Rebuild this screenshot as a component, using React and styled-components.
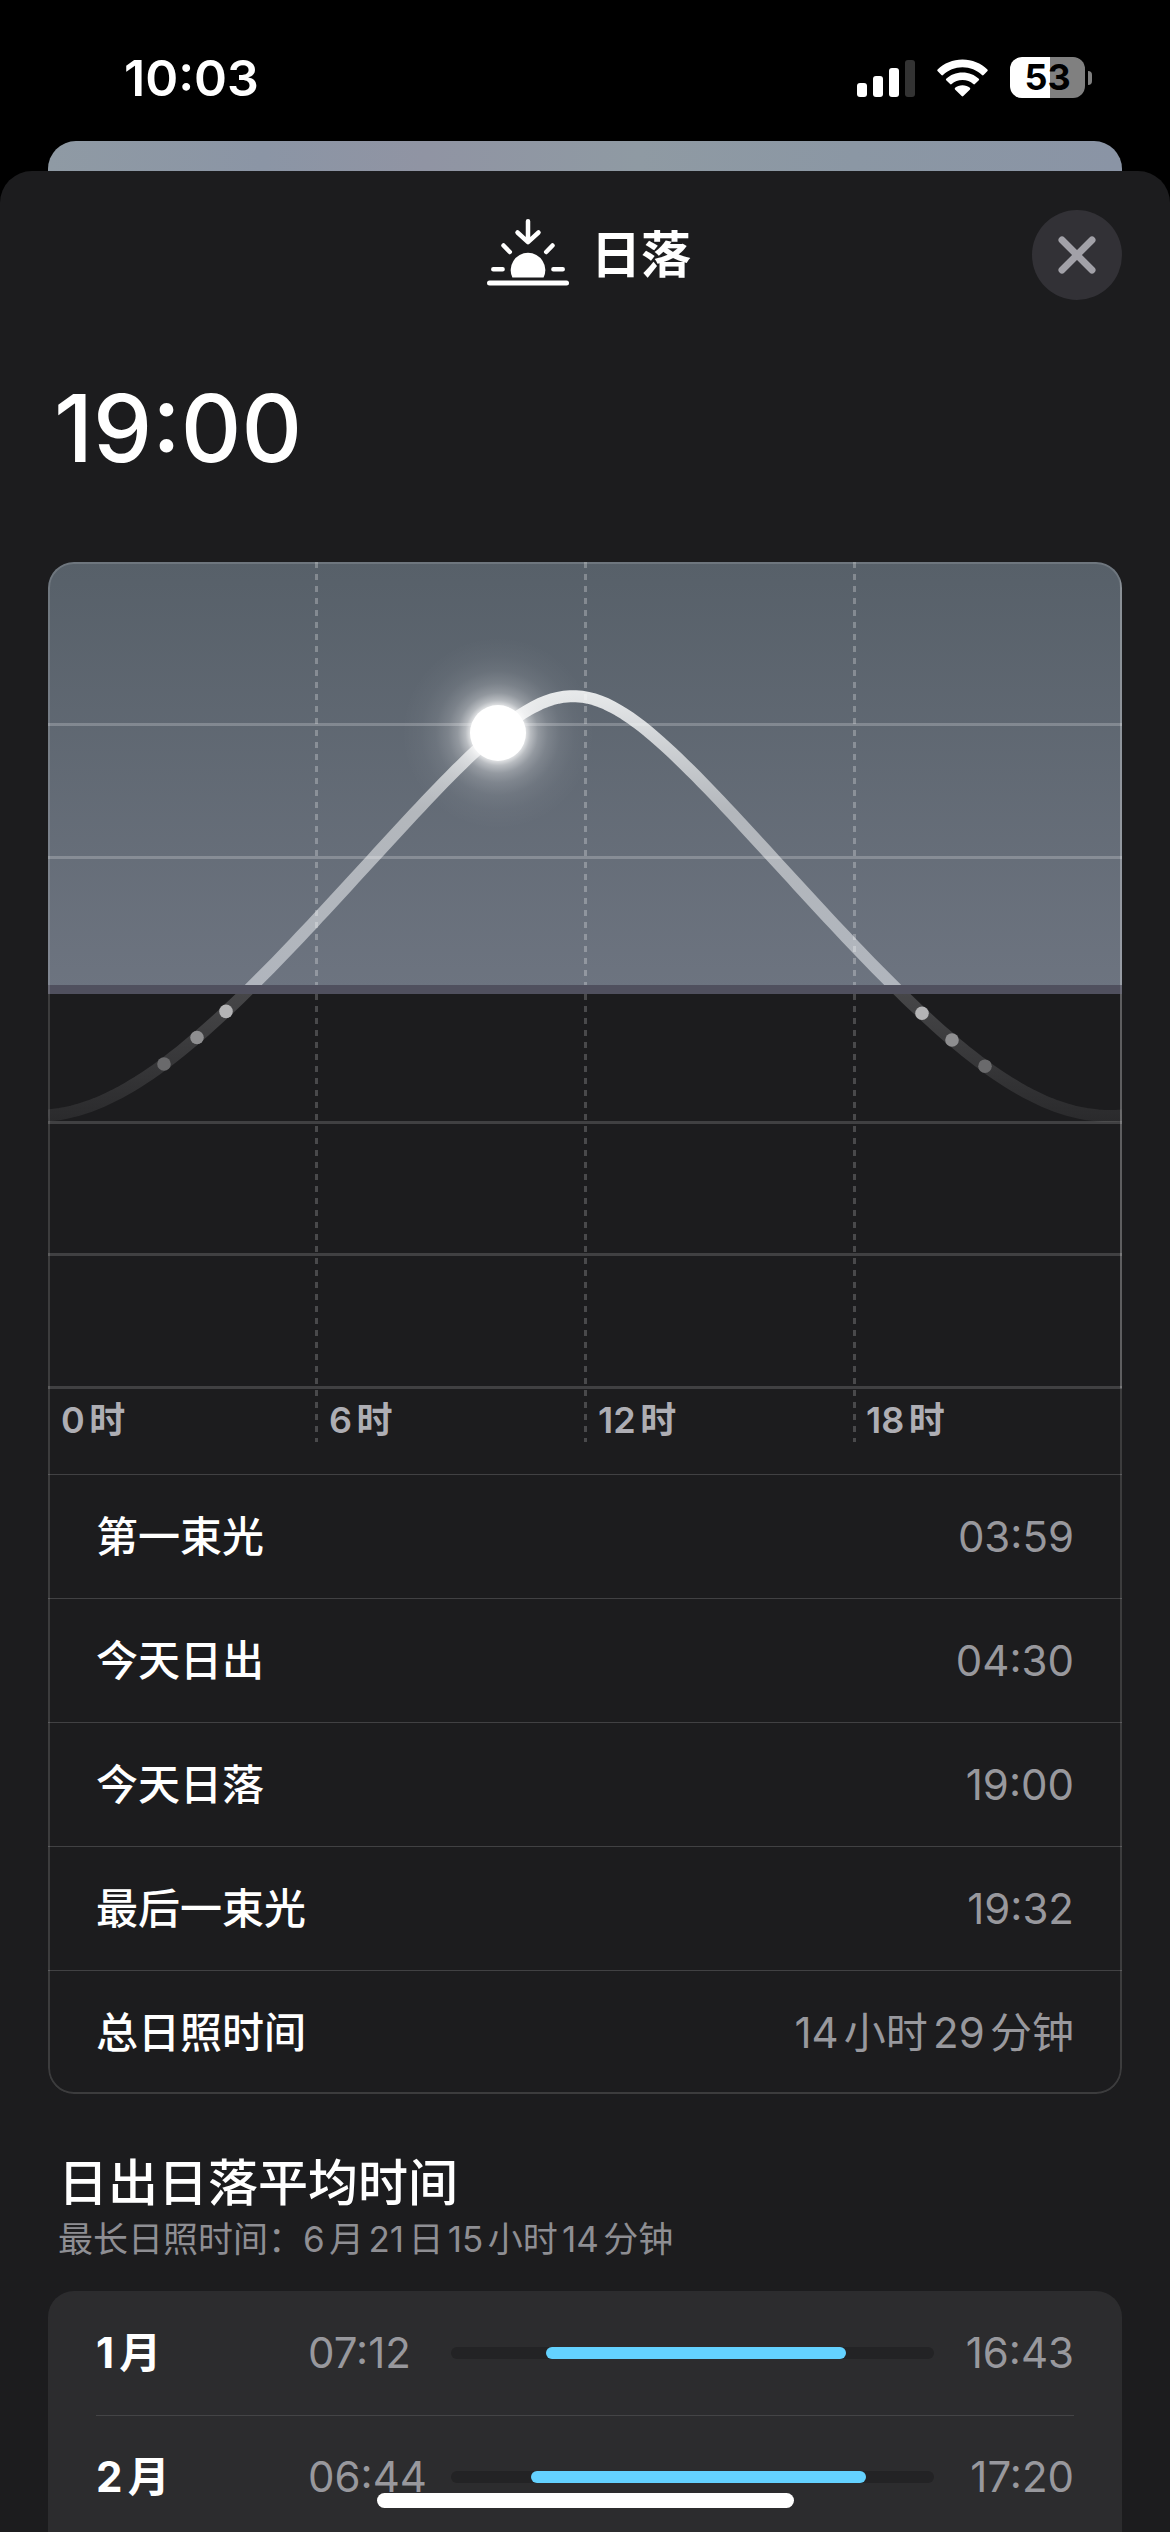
import React from 'react';
import styled, { createGlobalStyle } from 'styled-components';

const GlobalStyle = createGlobalStyle`
  * {
    box-sizing: border-box;
  }
  body {
    margin: 0;
    background: #000;
    color: #fff;
    font-family: Inter, 'Noto Sans CJK SC', sans-serif;
    text-autospace: normal;
  }
`;
const Screen = styled.div`
  display: flex;
  flex-direction: column;
  height: 100vh;
  overflow: hidden;
`;
const StatusBar = styled.div`
  display: flex;
  flex: none;
  justify-content: space-between;
  align-items: center;
  height: 141px;
  padding: 14px 78px 0 124px;
`;
const Clock = styled.div`
  font-size: 50px;
  line-height: 60px;
  font-weight: 600;
`;
const StatusIcons = styled.div`
  display: flex;
  align-items: center;
  gap: 22px;
`;
const BatteryBox = styled.div`
  display: flex;
  align-items: center;
  gap: 3px;
`;
const BatteryBody = styled.div`
  width: 75px;
  height: 41px;
  border-radius: 12px;
  background: linear-gradient(to right, #fff ${props => props.$level}%, #808080 ${props => props.$level}%);
  color: #000;
  font-size: 36px;
  line-height: 41px;
  font-weight: 700;
  text-align: center;
`;
const BatteryTip = styled.div`
  width: 4px;
  height: 14px;
  border-radius: 0 7px 7px 0;
  background: #808080;
`;
const BackCard = styled.div`
  height: 30px;
  flex: none;
  margin: 0 48px;
  border-radius: 28px 28px 0 0;
  background: linear-gradient(to right, #8f9aa4, #8b95a5 20%, #9094a3 35%, #8f9aa3 55%, #8b97a4 75%, #8a94a5);
`;
const Sheet = styled.main`
  flex: 1;
  padding: 39px 48px 0;
  border-radius: 32px 32px 0 0;
  background: #1c1c1e;
`;
const Header = styled.header`
  display: grid;
  grid-template-columns: 90px 1fr 90px;
  align-items: center;
`;
const Title = styled.h1`
  grid-column: 2;
  display: flex;
  justify-content: center;
  align-items: center;
  gap: 22px;
  margin: 0;
  padding-left: 8px;
  font-size: 50px;
  line-height: 60px;
  font-weight: 600;
`;
const CloseButton = styled.button`
  display: flex;
  justify-content: center;
  align-items: center;
  width: 90px;
  height: 90px;
  padding: 0;
  border: none;
  border-radius: 50%;
  background: #323136;
  cursor: pointer;
`;
const BigTime = styled.div`
  padding: 72px 6px 78px;
  font-size: 94px;
  line-height: 112px;
  font-weight: 500;
`;
const Card = styled.section`
  position: relative;
  overflow: hidden;
  border-radius: 26px;

  /* hairline drawn over the chart */
  &::after {
    content: '';
    position: absolute;
    inset: 0;
    border: 2px solid rgba(255, 255, 255, 0.14);
    border-radius: 26px;
    pointer-events: none;
  }
`;
const ChartSvg = styled.svg`
  display: block;
  width: 100%;
  height: auto;
`;
const AxisText = styled.text`
  fill: #aeaeb4;
  font-size: 36px;
  font-weight: 600;
`;
const Details = styled.dl`
  margin: 0;
`;
const DetailRow = styled.div`
  display: flex;
  justify-content: space-between;
  align-items: center;
  height: 124px;
  padding: 0 48px;
  border-top: 1px solid #414143;
  font-size: 42px;
  line-height: 60px;
`;
const DetailLabel = styled.dt`
  font-weight: 500;
`;
const DetailValue = styled.dd`
  margin: 0;
  color: #98989d;
`;
const SectionTitle = styled.h2`
  margin: 0;
  padding: 57px 10px 0;
  font-size: 50px;
  line-height: 64px;
  font-weight: 500;
`;
const SectionNote = styled.p`
  margin: 0;
  padding: 0 10px 28px;
  color: #8e8e93;
  font-size: 35px;
  line-height: 48px;
`;
const MonthCard = styled.section`
  padding: 0 48px 48px;
  border-radius: 26px;
  background: #2c2c2e;
`;
const MonthTable = styled.table`
  width: 100%;
  border-collapse: collapse;
  font-size: 42px;
  line-height: 60px;
`;
const MonthRow = styled.tr`
  height: 124px;

  & + & {
    border-top: 1px solid #444446;
  }
`;
const MonthName = styled.th`
  min-width: 212px;
  padding: 0;
  font-weight: 700;
  text-align: left;
`;
const MonthTime = styled.td`
  min-width: 114px;
  padding: 0;
  color: #98989d;
  text-align: ${props => props.$align};
`;
const BarCell = styled.td`
  width: 100%;
  padding: 0 26px 0 24px;
`;
const Track = styled.div`
  height: 12px;
  border-radius: 6px;
  background: #232325;
`;
const Daylight = styled.div`
  height: 12px;
  border-radius: 6px;
  background: #64d2ff;
`;
const HomeIndicator = styled.div`
  position: fixed;
  bottom: 24px;
  left: 50%;
  width: 417px;
  height: 15px;
  margin-left: -208px;
  border-radius: 8px;
  background: #fff;
`;

const details = [
  { label: '第一束光', value: '03:59' },
  { label: '今天日出', value: '04:30' },
  { label: '今天日落', value: '19:00' },
  { label: '最后一束光', value: '19:32' },
  { label: '总日照时间', value: '14小时29分钟' },
];
const months = [
  { name: '1月', sunrise: '07:12', sunset: '16:43' },
  { name: '2月', sunrise: '06:44', sunset: '17:20' },
];

// chart geometry
const WIDTH = 1074;
const HORIZON = 423;
const NOON = 525;
const PX_PER_DEGREE = 4.41;
const rad = deg => (deg * Math.PI) / 180;

// solar elevation for latitude 42.4 and declination 17.9
const sunY = x => {
  const hour = ((x - NOON) / WIDTH) * 2 * Math.PI;
  const sin = Math.sin(rad(42.4)) * Math.sin(rad(17.9))
    + Math.cos(rad(42.4)) * Math.cos(rad(17.9)) * Math.cos(hour);
  return HORIZON - (Math.asin(sin) * 180 / Math.PI) * PX_PER_DEGREE;
};
const curve = Array.from({ length: 180 }, (_, i) => {
  const x = i * 6;
  return `${i ? 'L' : 'M'}${x} ${sunY(x).toFixed(1)}`;
}).join('');

const gridRows = [162, 295, 560, 692, 825];
const gridColumns = [268, 537, 806];
const hours = [
  { x: 13, text: '0时' },
  { x: 281, text: '6时' },
  { x: 550, text: '12时' },
  { x: 818, text: '18时' },
];
const dots = [
  { x: 116, color: '#6a6a6c' },
  { x: 149, color: '#8e8e90' },
  { x: 178, color: '#b4b4b6' },
  { x: 874, color: '#b4b4b6' },
  { x: 904, color: '#8e8e90' },
  { x: 937, color: '#6a6a6c' },
];

const toMinutes = time => {
  const [h, m] = time.split(':').map(Number);
  return h * 60 + m;
};
// the bars run from 04:12 to 19:30
const percent = minutes => (minutes / 918) * 100;
const barStyle = (sunrise, sunset) => ({
  marginLeft: `${percent(toMinutes(sunrise) - 252)}%`,
  width: `${percent(toMinutes(sunset) - toMinutes(sunrise))}%`,
});

const Signal = () => (
  <svg width="58" height="38" viewBox="0 0 58 38" aria-hidden="true">
    <rect x="0" y="24" width="10" height="14" rx="3" fill="#fff" />
    <rect x="16" y="17" width="10" height="21" rx="3" fill="#fff" />
    <rect x="32" y="9" width="10" height="29" rx="3" fill="#fff" />
    <rect x="48" y="1" width="10" height="37" rx="3" fill="#333" />
  </svg>
);

const Wifi = () => (
  <svg width="51" height="38" viewBox="0 0 51 38" aria-hidden="true">
    <path fill="#fff" d="M25.5 0.5C35.2 0.5 44 4.3 50.4 10.5C50.9 11 50.9 11.6 50.5 12.1L46.6 16C46.1 16.5 45.5 16.5 45 16C39.9 11.2 33 8.3 25.5 8.3S11.1 11.2 6 16C5.5 16.5 4.9 16.5 4.4 16L0.5 12.1C0.1 11.6 0.1 11 0.6 10.5C7 4.3 15.8 0.5 25.5 0.5Z" />
    <path fill="#fff" d="M25.5 13.4C31.9 13.4 37.7 15.8 41.8 19.7C42.3 20.2 42.3 20.8 41.8 21.3L37.9 25.1C37.4 25.6 36.8 25.6 36.3 25.1C33.5 22.5 29.7 21 25.5 21S17.5 22.5 14.7 25.1C14.2 25.6 13.6 25.6 13.1 25.1L9.2 21.3C8.7 20.8 8.7 20.2 9.2 19.7C13.3 15.8 19.1 13.4 25.5 13.4Z" />
    <path fill="#fff" d="M25.5 26.2C28.4 26.2 31 27.2 32.9 28.8C33.4 29.3 33.4 29.9 33 30.4L26.3 37C25.8 37.5 25.2 37.5 24.7 37L18 30.4C17.6 29.9 17.6 29.3 18.1 28.8C20 27.2 22.6 26.2 25.5 26.2Z" />
  </svg>
);

const SunsetIcon = () => (
  <svg width="82" height="72" viewBox="0 0 82 72" fill="none" stroke="#fff" strokeWidth="4.5" strokeLinecap="round" strokeLinejoin="round" aria-hidden="true">
    <path d="M41 2.3V22.5M30.5 13.5L41 23.2L51.5 13.5" />
    <path d="M16.5 26.5L22.8 33M65.5 26.5L59.2 33M6.3 50.3H15.6M66.4 50.3H75.7" />
    <path d="M2.5 64H79.5" strokeWidth="5" />
    <path d="M25.4 58.6A17.3 17.3 0 1 1 56.6 58.6Z" fill="#fff" stroke="none" />
  </svg>
);

const SunChart = () => (
  <ChartSvg viewBox="0 0 1074 912" role="img" aria-label="太阳高度">
    <defs>
      <linearGradient id="sky" x1="0" y1="0" x2="0" y2="1">
        <stop offset="0" stopColor="#576069" />
        <stop offset="1" stopColor="#6d7480" />
      </linearGradient>
      <linearGradient id="dayLine" gradientUnits="userSpaceOnUse" x1="0" y1="128" x2="0" y2="432">
        <stop offset="0" stopColor="#e8eaeb" />
        <stop offset="0.15" stopColor="#d2d5d8" />
        <stop offset="0.4" stopColor="#b3b7bc" />
        <stop offset="1" stopColor="#b0b5bd" />
      </linearGradient>
      <linearGradient id="nightLine" gradientUnits="userSpaceOnUse" x1="0" y1="432" x2="0" y2="560">
        <stop offset="0" stopColor="#464648" />
        <stop offset="1" stopColor="#2a2a2c" />
      </linearGradient>
      <radialGradient id="glow">
        <stop offset="0.28" stopColor="#fff" stopOpacity="0.85" />
        <stop offset="0.34" stopColor="#fff" stopOpacity="0.55" />
        <stop offset="0.42" stopColor="#fff" stopOpacity="0.32" />
        <stop offset="0.52" stopColor="#fff" stopOpacity="0.18" />
        <stop offset="0.65" stopColor="#fff" stopOpacity="0.08" />
        <stop offset="0.8" stopColor="#fff" stopOpacity="0.03" />
        <stop offset="1" stopColor="#fff" stopOpacity="0" />
      </radialGradient>
      <clipPath id="day">
        <rect width="1074" height="428" />
      </clipPath>
      <clipPath id="night">
        <rect y="428" width="1074" height="484" />
      </clipPath>
    </defs>
    <rect width="1074" height="428" fill="url(#sky)" />
    <path d={curve} fill="none" stroke="url(#dayLine)" strokeWidth="12" clipPath="url(#day)" />
    <path d={curve} fill="none" stroke="url(#nightLine)" strokeWidth="12" clipPath="url(#night)" />
    {gridRows.map(y => (
      <path key={y} d={`M0 ${y + 0.5}H1074`} stroke="#fff" strokeWidth="3" strokeOpacity={y < HORIZON ? 0.22 : 0.16} />
    ))}
    {gridColumns.map(x => (
      <g key={x} stroke="#fff" strokeWidth="3" strokeDasharray="6 6">
        <path d={`M${x + 0.5} 0V424`} strokeOpacity="0.26" />
        <path d={`M${x + 0.5} 432V880`} strokeOpacity="0.2" />
      </g>
    ))}
    <path d="M1073 0V826" stroke="#fff" strokeWidth="2" strokeOpacity="0.18" />
    <rect y="423" width="1074" height="9" fill="#50505e" />
    {dots.map(dot => (
      <circle key={dot.x} cx={dot.x} cy={sunY(dot.x)} r="6.8" fill={dot.color} />
    ))}
    <circle cx="450" cy="171" r="96" fill="url(#glow)" />
    <circle cx="450" cy="171" r="28" fill="#fff" />
    {hours.map(hour => (
      <AxisText key={hour.x} x={hour.x} y="871">{hour.text}</AxisText>
    ))}
  </ChartSvg>
);

const App = () => {
  return (
    <Screen>
      <GlobalStyle />
      <StatusBar>
        <Clock>10:03</Clock>
        <StatusIcons>
          <Signal />
          <Wifi />
          <BatteryBox>
            <BatteryBody $level={53}>53</BatteryBody>
            <BatteryTip />
          </BatteryBox>
        </StatusIcons>
      </StatusBar>
      <BackCard />
      <Sheet>
        <Header>
          <Title>
            <SunsetIcon />
            日落
          </Title>
          <CloseButton type="button" aria-label="关闭">
            <svg width="38" height="38" viewBox="0 0 38 38" aria-hidden="true">
              <path d="M4 4L34 34M34 4L4 34" stroke="#a2a1a8" strokeWidth="7" strokeLinecap="round" />
            </svg>
          </CloseButton>
        </Header>
        <BigTime>19:00</BigTime>
        <Card>
          <SunChart />
          <Details>
            {details.map(item => (
              <DetailRow key={item.label}>
                <DetailLabel>{item.label}</DetailLabel>
                <DetailValue>{item.value}</DetailValue>
              </DetailRow>
            ))}
          </Details>
        </Card>
        <SectionTitle>日出日落平均时间</SectionTitle>
        <SectionNote>最长日照时间：6月21日15小时14分钟</SectionNote>
        <MonthCard>
          <MonthTable>
            <tbody>
              {months.map(month => (
                <MonthRow key={month.name}>
                  <MonthName scope="row">{month.name}</MonthName>
                  <MonthTime $align="left">{month.sunrise}</MonthTime>
                  <BarCell>
                    <Track>
                      <Daylight style={barStyle(month.sunrise, month.sunset)} />
                    </Track>
                  </BarCell>
                  <MonthTime $align="right">{month.sunset}</MonthTime>
                </MonthRow>
              ))}
            </tbody>
          </MonthTable>
        </MonthCard>
      </Sheet>
      <HomeIndicator />
    </Screen>
  );
};

export default App;
